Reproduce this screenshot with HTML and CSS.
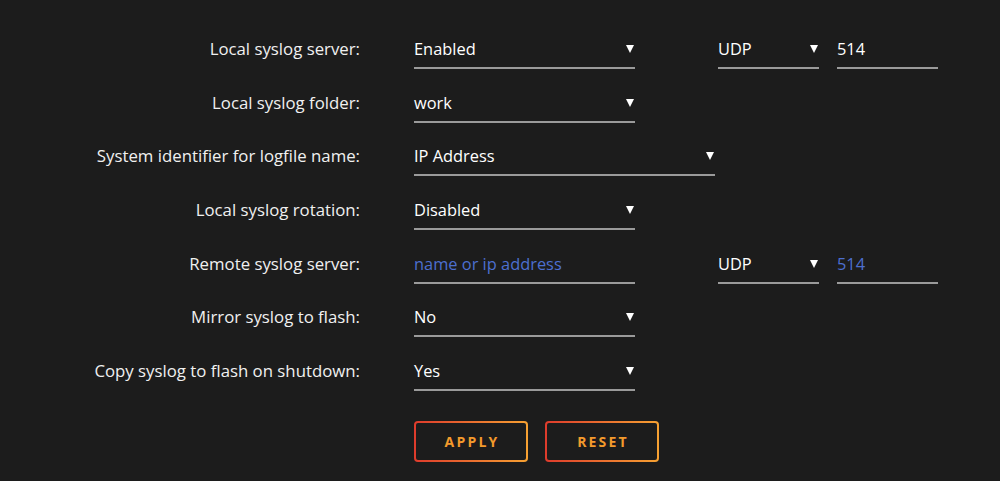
FILE: index.html
```html
<!DOCTYPE html>
<html lang="en">
<head>
  <meta charset="UTF-8">
  <title>Syslog settings</title>
  <link rel="stylesheet" href="styles.css">
</head>
<body>
  <form class="form">
    <div class="row">
      <label class="lbl">Local syslog server:</label>
      <div class="fields">
        <div class="select">Enabled</div>
        <div class="select small proto">UDP</div>
        <div class="input small">514</div>
      </div>
    </div>
    <div class="row">
      <label class="lbl">Local syslog folder:</label>
      <div class="fields">
        <div class="select">work</div>
      </div>
    </div>
    <div class="row">
      <label class="lbl">System identifier for logfile name:</label>
      <div class="fields">
        <div class="select wide">IP Address</div>
      </div>
    </div>
    <div class="row">
      <label class="lbl">Local syslog rotation:</label>
      <div class="fields">
        <div class="select">Disabled</div>
      </div>
    </div>
    <div class="row">
      <label class="lbl">Remote syslog server:</label>
      <div class="fields">
        <div class="input placeholder">name or ip address</div>
        <div class="select small proto">UDP</div>
        <div class="input small placeholder">514</div>
      </div>
    </div>
    <div class="row">
      <label class="lbl">Mirror syslog to flash:</label>
      <div class="fields">
        <div class="select">No</div>
      </div>
    </div>
    <div class="row">
      <label class="lbl">Copy syslog to flash on shutdown:</label>
      <div class="fields">
        <div class="select">Yes</div>
      </div>
    </div>
    <div class="actions">
      <button type="button" class="btn">APPLY</button>
      <button type="button" class="btn">RESET</button>
    </div>
  </form>
</body>
</html>
```

FILE: styles.css
```css
body {
  background: #1c1c1c;
  font-family: 'Open Sans', sans-serif;
  color: #f2f2f2;
  margin: 0;
  padding: 0;
}
.form {
  padding-top: 31px;
}
.row {
  display: grid;
  grid-template-columns: 360px 1fr;
  column-gap: 54px;
  height: 53.67px;
}
.lbl {
  text-align: right;
  font-size: 16.8px;
  line-height: 36px;
  color: #f0f0f0;
}
.fields {
  display: flex;
  align-items: flex-start;
}
.select,
.input {
  position: relative;
  box-sizing: border-box;
  width: 221px;
  height: 38px;
  line-height: 36px;
  font-size: 16.4px;
  color: #fff;
  border-bottom: 2px solid #9a9a9a;
}
.select::after {
  content: '';
  position: absolute;
  right: 1px;
  top: 14px;
  border-left: 4px solid transparent;
  border-right: 4px solid transparent;
  border-top: 8px solid #fff;
}
.wide {
  width: 301px;
}
.small {
  width: 101px;
}
.proto {
  margin-left: 83px;
  margin-right: 18px;
}
.placeholder {
  color: #4d6fcf;
}
.actions {
  display: flex;
  gap: 17px;
  padding-left: 414px;
  margin-top: 14px;
}
.btn {
  width: 114px;
  height: 41px;
  border: 2px solid transparent;
  border-radius: 4px;
  background: linear-gradient(#1c1c1c, #1c1c1c) padding-box,
              linear-gradient(90deg, #de3b2c, #f6a132) border-box;
  color: #f39a2c;
  font-family: 'Open Sans', sans-serif;
  font-weight: bold;
  font-size: 14px;
  letter-spacing: 2.2px;
  padding: 0 0 0 2px;
  cursor: pointer;
}
```
